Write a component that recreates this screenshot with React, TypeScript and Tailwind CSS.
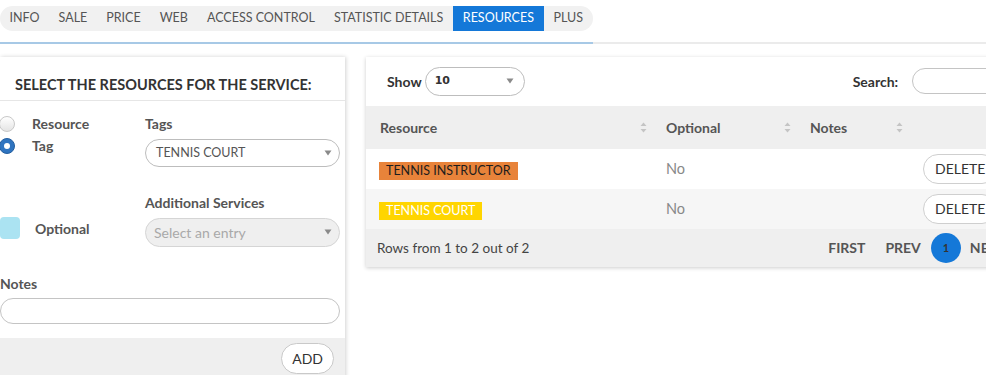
import React from 'react'

const tabs = ['INFO', 'SALE', 'PRICE', 'WEB', 'ACCESS CONTROL', 'STATISTIC DETAILS', 'RESOURCES', 'PLUS']

function Caret() {
  return (
    <svg width="8" height="6" viewBox="0 0 8 6" className="shrink-0">
      <path d="M0.5 0.5 L7.5 0.5 L4 5.5 Z" fill="#8a8a8a" />
    </svg>
  )
}

function SortIcon() {
  return (
    <svg width="7" height="11" viewBox="0 0 7 11" className="shrink-0">
      <path d="M3.5 0.5 L6.5 4 L0.5 4 Z" fill="#c4c4c4" />
      <path d="M3.5 10.5 L6.5 7 L0.5 7 Z" fill="#c4c4c4" />
    </svg>
  )
}

function Radio({ checked }: { checked?: boolean }) {
  if (checked) {
    return (
      <span className="w-[16px] h-[16px] rounded-full bg-[#2f74c0] border border-[#245f9f] flex items-center justify-center shrink-0">
        <span className="w-[6px] h-[6px] rounded-full bg-white" />
      </span>
    )
  }
  return <span className="w-[16px] h-[16px] rounded-full border border-[#c8c8c8] bg-gradient-to-b from-white to-[#e4e4e4] shrink-0" />
}

const rows = [
  { name: 'TENNIS INSTRUCTOR', badge: 'bg-[#e8833a] text-[#1d1d1d]', bg: 'bg-white' },
  { name: 'TENNIS COURT', badge: 'bg-[#ffd500] text-white', bg: 'bg-[#f6f6f6]' },
]

export default function App() {
  return (
    <div className="w-[986px] h-[375px] overflow-hidden bg-white text-[#555] font-['Lato',sans-serif]">
      {/* Tabs */}
      <div className="pt-[4px]">
        <div className="inline-flex items-stretch h-[25px] rounded-full bg-[#f1f1f1]">
          {tabs.map(t => (
            <span
              key={t}
              className={
                t === 'RESOURCES'
                  ? 'flex items-center px-[10px] text-[12.5px] bg-[#1478d8] text-white'
                  : 'flex items-center px-[9.5px] text-[12.5px] text-[#555]'
              }
            >
              {t}
            </span>
          ))}
        </div>
      </div>
      <div className="mt-[11px] flex h-[2px]">
        <div className="w-[593px] bg-[#a7c9e6]" />
        <div className="flex-1 bg-[#ebebeb]" />
      </div>

      <div className="flex gap-[21px] mt-[13px] items-start">
        {/* Left panel */}
        <div className="w-[345px] shrink-0 bg-white shadow-[1px_0_4px_rgba(0,0,0,0.18)]">
          <div className="h-[44px] pt-[17px] pl-[15px] border-b border-[#e6e6e6] text-[14.5px] font-bold text-[#333]">
            SELECT THE RESOURCES FOR THE SERVICE:
          </div>
          <div className="grid grid-cols-[145px_195px] pt-[14px]">
            <div className="flex flex-col gap-[4px] -ml-[1px]">
              <label className="flex items-center gap-[17px] h-[18px]">
                <Radio />
                <span className="text-[14px] font-bold">Resource</span>
              </label>
              <label className="flex items-center gap-[17px] h-[18px]">
                <Radio checked />
                <span className="text-[14px] font-bold">Tag</span>
              </label>
            </div>
            <div>
              <div className="text-[14px] font-bold h-[18px] leading-[18px]">Tags</div>
              <div className="mt-[6px] h-[28px] rounded-full border border-[#bdbdbd] flex items-center justify-between pl-[10px] pr-[7px]">
                <span className="text-[12.5px] text-[#555]">TENNIS COURT</span>
                <Caret />
              </div>
            </div>

            <div className="flex items-center gap-[15px] pt-[43px]">
              <span className="w-[20px] h-[22px] rounded-[4px] bg-[#abe3f2]" />
              <span className="text-[14px] font-bold">Optional</span>
            </div>
            <div className="pt-[27px]">
              <div className="text-[14px] font-bold h-[18px] leading-[18px]">Additional Services</div>
              <div className="mt-[6px] h-[29px] rounded-full border border-[#d5d5d5] bg-[#efefef] flex items-center justify-between pl-[8px] pr-[7px]">
                <span className="text-[14px] text-[#a9a9a9]">Select an entry</span>
                <Caret />
              </div>
            </div>
          </div>
          <div className="pt-[28px] pr-[5px]">
            <div className="text-[14px] font-bold h-[18px] leading-[18px]">Notes</div>
            <div className="mt-[5px] h-[26px] rounded-full border border-[#c4c4c4]" />
          </div>
          <div className="mt-[14px] bg-[#efefef] h-[40px] flex justify-end items-start pt-[5px] pr-[11px]">
            <button className="h-[31px] px-[10px] rounded-full border border-[#c9c9c9] bg-white text-[14px] text-[#333]">ADD</button>
          </div>
        </div>

        {/* Right panel */}
        <div className="w-[700px] shrink-0 bg-white shadow-[0_1px_4px_rgba(0,0,0,0.2)]">
          <div className="h-[49px] flex items-center pl-[21px]">
            <span className="shrink-0 text-[14px] font-bold text-[#333] mr-[3px]">Show</span>
            <div className="shrink-0 w-[100px] h-[29px] rounded-full border border-[#bdbdbd] flex items-center justify-between pl-[9px] pr-[10px]">
              <span className="text-[11px] font-bold text-[#333] font-['DejaVu_Sans',sans-serif]">10</span>
              <Caret />
            </div>
            <span className="shrink-0 ml-[328px] text-[14px] font-bold text-[#333]">Search:</span>
            <div className="shrink-0 ml-[14px] w-[200px] h-[26px] rounded-full border border-[#c4c4c4]" />
          </div>
          <div className="grid grid-cols-[286px_144px_113px_157px] h-[43px] bg-[#efefef] items-center text-[14px] font-bold">
            <div className="flex items-center justify-between pl-[14px] pr-[5px]">
              <span>Resource</span>
              <SortIcon />
            </div>
            <div className="flex items-center justify-between pl-[14px] pr-[5px]">
              <span>Optional</span>
              <SortIcon />
            </div>
            <div className="flex items-center justify-between pl-[14px] pr-[6px]">
              <span>Notes</span>
              <SortIcon />
            </div>
            <div />
          </div>
          {rows.map(r => (
            <div key={r.name} className={`grid grid-cols-[286px_144px_113px_157px] h-[40px] items-center ${r.bg}`}>
              <div className="pl-[13px]">
                <span className={`inline-block px-[7px] h-[18px] leading-[18px] text-[12.5px] ${r.badge}`}>{r.name}</span>
              </div>
              <div className="pl-[14px] text-[14.5px] text-[#888]">No</div>
              <div />
              <div className="pl-[14px]">
                <button className="h-[30px] px-[11px] rounded-full border border-[#cfcfcf] bg-white text-[14px] text-[#333]">DELETE</button>
              </div>
            </div>
          ))}
          <div className="h-[38px] bg-[#efefef] flex items-center pl-[11px]">
            <span className="shrink-0 text-[13.5px] text-[#444]">Rows from 1 to 2 out of 2</span>
            <span className="shrink-0 ml-[299px] text-[14px] font-bold">FIRST</span>
            <span className="shrink-0 ml-[20px] text-[14px] font-bold">PREV</span>
            <span className="shrink-0 ml-[10px] w-[30px] h-[30px] rounded-full bg-[#1478d8] flex items-center justify-center text-[11px] font-bold text-[#333]">1</span>
            <span className="shrink-0 ml-[9px] text-[14px] font-bold">NEXT</span>
          </div>
        </div>
      </div>
    </div>
  )
}
